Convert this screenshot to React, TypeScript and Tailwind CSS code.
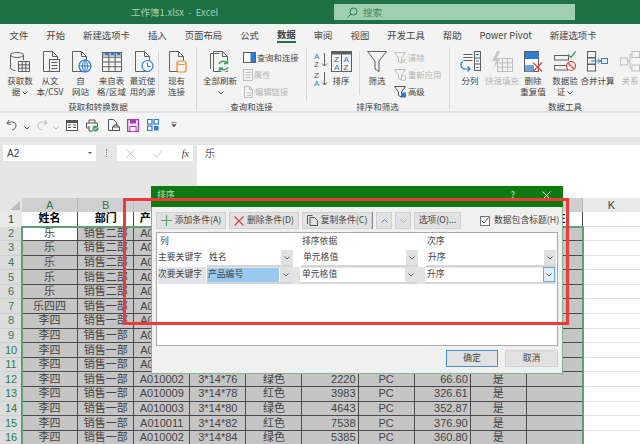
import type { ReactNode } from 'react';

const tabs = ['文件', '开始', '新建选项卡', '插入', '页面布局', '公式', '数据', '审阅', '视图', '开发工具', '帮助', 'Power Pivot', '新建选项卡'];
const columns = ['A', 'B', 'C', 'D', 'E', 'F', 'G', 'H', 'I', 'J'];
// D to I of the header row sit behind the dialog
const headers = ['姓名', '部门', '产品编号', '', '', '', '', '', '', '备注'];

const visibleRows: Record<number, string[]> = {
  12: ['A010002', '3*14*76', '绿色', '2220', '66.60'],
  13: ['A010009', '3*14*78', '红色', '3983', '326.61'],
  14: ['A010003', '3*14*80', '绿色', '4643', '352.87'],
  15: ['A010011', '3*14*82', '红色', '7538', '376.90'],
  16: ['A010002', '3*14*84', '绿色', '5385', '360.80'],
};

const rows = Array.from({ length: 15 }, (_, i) => {
  const n = i + 2;
  const name = n <= 6 ? '乐' : n === 7 ? '乐四四' : '李四';
  const dept = n <= 6 ? '销售二部' : '销售一部';
  const v = visibleRows[n];
  if (!v) return { n, cells: [name, dept, 'A0', '', '', '', '', '', '', ''] };
  return { n, cells: [name, dept, v[0], v[1], v[2], v[3], 'PC', v[4], '是', ''] };
});

const S = { fill: 'none', stroke: '#5f5f5f', strokeWidth: 1 };
const B = { fill: 'none', stroke: '#2b7cd3', strokeWidth: 1 };
const G = { fill: 'none', stroke: '#bdbdbd', strokeWidth: 1 };

function Ico({ w = 24, h = 24, children }: { w?: number; h?: number; children: ReactNode }) {
  return (
    <svg width={w} height={h} viewBox={`0 0 ${w} ${h}`} className="block shrink-0">
      {children}
    </svg>
  );
}

const Doc = ({ p = S }: { p?: typeof S }) => <path {...p} d="M3.5 1.5h9l5 5v15h-14zM12.5 1.5v5h5" />;

function Grid({ x, y, w, h, nx, ny, p = S }: { x: number; y: number; w: number; h: number; nx: number; ny: number; p?: typeof S }) {
  const d: string[] = [];
  for (let i = 0; i <= nx; i++) d.push(`M${x + (w * i) / nx} ${y}v${h}`);
  for (let i = 0; i <= ny; i++) d.push(`M${x} ${y + (h * i) / ny}h${w}`);
  return <path {...p} d={d.join('')} />;
}

const GetData = () => (
  <Ico w={22} h={22}>
    <path {...S} d="M1.5 4v13c0 1.5 3 2.5 5 2.5M14.5 4v5" />
    <ellipse {...S} cx="8" cy="4" rx="6.5" ry="2.5" />
    <rect x="9" y="10.5" width="12" height="10" fill="#f3f3f3" />
    <Grid x={9.5} y={10.5} w={11} h={10} nx={3} ny={3} />
  </Ico>
);
const FromText = () => (
  <Ico w={21} h={23}>
    <Doc />
    <rect x="9.5" y="9.5" width="10" height="12" fill="#f3f3f3" stroke="#5f5f5f" />
    <path {...S} d="M11.5 12.5h6M11.5 15.5h6M11.5 18.5h6" />
  </Ico>
);
const FromWeb = () => (
  <Ico w={23} h={23}>
    <Doc />
    <circle cx="16" cy="16" r="6" fill="#f3f3f3" stroke="#2b7cd3" strokeWidth="1.2" />
    <path {...B} d="M10 16h12M16 10v12M16 10c-3.5 3-3.5 9 0 12M16 10c3.5 3 3.5 9 0 12" />
  </Ico>
);
const FromTable = () => (
  <Ico w={22} h={22}>
    <rect x="1" y="1" width="20" height="4" fill="#9cc3e8" />
    <Grid x={1.5} y={1.5} w={19} h={19} nx={3} ny={4} />
    <path stroke="#2b7cd3" strokeWidth="2" d="M4 3h3M10 3h3M16 3h3" />
  </Ico>
);
const Recent = () => (
  <Ico w={22} h={23}>
    <Doc />
    <circle cx="15.5" cy="16" r="5.5" fill="#f3f3f3" stroke="#2b7cd3" strokeWidth="1.2" />
    <path {...B} d="M15.5 12.5V16.5H18.5" />
  </Ico>
);
const Existing = () => (
  <Ico w={22} h={23}>
    <Doc />
    <rect x="11" y="11" width="9" height="11" rx="2" fill="#f3f3f3" stroke="#e88a2f" strokeWidth="1.2" />
    <path fill="none" stroke="#e88a2f" d="M11 13.5c2 1.5 7 1.5 9 0" />
  </Ico>
);
const RefreshAll = () => (
  <Ico w={22} h={24}>
    <path {...S} d="M1.5 19V3.5h9" />
    <path {...S} d="M4.5 1.5h9l5 5v15h-14zM13.5 1.5v5h5" />
    <circle cx="14.5" cy="15.5" r="6.5" fill="#f3f3f3" />
    <path fill="none" stroke="#3fa35f" strokeWidth="1.4" d="M10 14c1-3 6-4 8-1M19 17c-1 3-6 4-8 1M18.5 10v3.5H15M10.5 21.5V18H14" />
  </Ico>
);
const QueryConn = () => (
  <Ico w={13} h={11}>
    <rect x=".5" y=".5" width="12" height="10" fill="#fff" stroke="#5f5f5f" />
    <rect x="7.5" y="1" width="4.5" height="9" fill="#2b7cd3" />
  </Ico>
);
const Props = () => (
  <Ico w={10} h={12}>
    <rect {...G} x=".5" y=".5" width="9" height="11" />
    <path {...G} d="M2.5 3.5h5M2.5 6h5M2.5 8.5h5" />
  </Ico>
);
const EditLinks = () => (
  <Ico w={11} h={12}>
    <path {...G} d="M1.5.5h5l3 3v8h-8zM6.5.5v3h3M4 7h4M4 9.5h4" />
  </Ico>
);
const SortAZ = ({ down }: { down?: boolean }) => (
  <Ico w={14} h={17}>
    <text x="0" y="8" fontSize="8" fill={down ? '#555' : '#2b7cd3'} fontFamily="Liberation Sans">{down ? 'Z' : 'A'}</text>
    <text x="0" y="16" fontSize="8" fill={down ? '#2b7cd3' : '#555'} fontFamily="Liberation Sans">{down ? 'A' : 'Z'}</text>
    <path {...S} d="M10.5 2v13M8 12.5l2.5 2.5 2.5-2.5" />
  </Ico>
);
const SortBig = () => (
  <Ico w={21} h={21}>
    <rect {...S} x=".5" y=".5" width="20" height="20" />
    <rect x="1" y="1" width="19" height="2.5" fill="#5f5f5f" />
    <path {...S} d="M10.5 3v17" />
    <text x="3" y="11" fontSize="8" fill="#555" fontFamily="Liberation Sans">Z</text>
    <text x="3" y="19" fontSize="8" fill="#2b7cd3" fontFamily="Liberation Sans">A</text>
    <text x="12.5" y="11" fontSize="8" fill="#2b7cd3" fontFamily="Liberation Sans">A</text>
    <text x="12.5" y="19" fontSize="8" fill="#555" fontFamily="Liberation Sans">Z</text>
  </Ico>
);
const Funnel = () => (
  <Ico w={20} h={21}>
    <path {...S} d="M.5.5h19L12 10v10.5l-4-2.5v-8z" />
  </Ico>
);
const SmallFunnel = ({ kind }: { kind: 'clear' | 'reapply' | 'adv' }) => (
  <Ico w={13} h={12}>
    <path fill="none" stroke={kind === 'adv' ? '#555' : '#bdbdbd'} d="M.5.5h11L7.5 6v5l-3-1.5V6z" />
    {kind === 'clear' && <path stroke="#bdbdbd" d="M7.5 7l4.5 4.5M12 7l-4.5 4.5" />}
    {kind === 'reapply' && <circle cx="9.5" cy="9" r="2.5" fill="none" stroke="#bdbdbd" />}
    {kind === 'adv' && <rect x="7" y="6.5" width="5" height="5" fill="#2b7cd3" />}
  </Ico>
);
const TextToCols = () => (
  <Ico w={21} h={21}>
    <path {...S} d="M3.5 3.5h9M3.5 6.5h9M3.5 9.5h9" />
    <rect {...S} x="14.5" y=".5" width="6" height="19" />
    <path {...S} d="M14.5 7h6M14.5 13h6" />
    <path stroke="#2b7cd3" d="M16 3.5h3M16 10h3M16 16.5h3" />
    <path {...B} strokeWidth="1.2" d="M3 10.5c-3.5 2-2.5 7.5 3 7.5h4M7.5 15.5L10 18l-2.5 2.5" />
  </Ico>
);
const FlashFill = () => (
  <Ico w={22} h={21}>
    <Grid x={6.5} y={7.5} w={15} h={13} nx={3} ny={3} p={G} />
    <path fill="#c8c8c8" d="M6 0L1 10h4l-3 8 8-11H6l3-7z" />
  </Ico>
);
const RemoveDup = () => (
  <Ico w={19} h={21}>
    <rect x=".5" y=".5" width="14" height="20" fill="#fff" stroke="#5f5f5f" />
    <rect x="1" y="1" width="13.5" height="7" fill="#2b7cd3" />
    <rect x="1" y="14" width="9" height="6.5" fill="#6aa5dd" />
    <path stroke="#e0443a" strokeWidth="1.2" d="M9 11.5l9 9M18 11.5l-9 9" />
  </Ico>
);
const Validate = () => (
  <Ico w={22} h={21}>
    <rect {...S} x=".5" y="4.5" width="14" height="4.5" />
    <rect {...S} x=".5" y="14.5" width="13" height="4.5" />
    <path fill="none" stroke="#3fa35f" strokeWidth="1.3" d="M14 3.5l3 3 4.5-6" />
    <circle cx="17" cy="15" r="4.5" fill="#f3f3f3" stroke="#e0443a" strokeWidth="1.2" />
    <path stroke="#e0443a" strokeWidth="1.2" d="M14 12l6 6" />
  </Ico>
);
const Consolidate = () => (
  <Ico w={21} h={21}>
    <rect {...S} x=".5" y=".5" width="8" height="6" />
    <rect {...S} x=".5" y="7" width="8" height="6" />
    <rect {...S} x=".5" y="13.5" width="8" height="6.5" />
    <rect {...B} x="14.5" y="7.5" width="6" height="5" />
    <path {...B} d="M4 10h10M11 7.5l2.5 2.5-2.5 2.5" />
  </Ico>
);
const Relations = () => (
  <Ico w={20} h={21}>
    <rect {...G} x=".5" y="7" width="7" height="7" />
    <rect {...G} x="12" y=".5" width="7.5" height="6" />
    <rect {...G} x="12" y="14" width="7.5" height="6" />
    <path {...G} d="M7.5 10.5H10M10 3.5V17M10 3.5h2M10 17h2" />
  </Ico>
);

function BigBtn({ w, icon, lines, off }: { w: string; icon: ReactNode; lines: ReactNode[]; off?: boolean }) {
  return (
    <div className={`${w} flex flex-col items-center pt-[3px] text-[8.5px] leading-[11px] ${off ? 'text-[#b4b4b4]' : ''}`}>
      <div className="h-[23px] flex items-center justify-center">{icon}</div>
      <div className="mt-[2px] flex flex-col items-center whitespace-nowrap">
        {lines.map((l, i) => <span key={i}>{l}</span>)}
      </div>
    </div>
  );
}

function SmallBtn({ icon, label, off }: { icon: ReactNode; label: string; off?: boolean }) {
  return (
    <div className={`h-[17px] flex items-center gap-[1px] text-[8.3px] whitespace-nowrap ${off ? 'text-[#b4b4b4]' : ''}`}>
      {icon}
      <span>{label}</span>
    </div>
  );
}

function Group({ w, label, children }: { w: string; label: string; children: ReactNode }) {
  return (
    <div className={`${w} shrink-0 flex flex-col h-[64px]`}>
      <div className="flex-1 flex">{children}</div>
      <div className="h-[11px] mb-[-1px] text-center text-[8.5px] leading-[11px]">{label}</div>
    </div>
  );
}

const Sep = ({ h = 'self-stretch', cls = '' }: { h?: string; cls?: string }) => (
  <div className={`w-px bg-[#dadada] shrink-0 ${h} ${cls}`} />
);

const Caret = () => (
  <svg width="6" height="4" viewBox="0 0 6 4" className="inline-block ml-[2px] align-middle">
    <path d="M.5.5L3 3 5.5.5" fill="none" stroke="#555" />
  </svg>
);

function Ribbon() {
  return (
    <div className="h-[64px] bg-[#f3f3f3] flex overflow-hidden text-[#444]">
      <Group w="w-[196px]" label="获取和转换数据">
        <BigBtn w="w-[35px] pl-[5px]" icon={<GetData />} lines={['获取数', <>据<Caret /></>]} />
        <BigBtn w="w-[30px]" icon={<FromText />} lines={['从文', '本/CSV']} />
        <BigBtn w="w-[31px]" icon={<FromWeb />} lines={['自', '网站']} />
        <BigBtn w="w-[31px]" icon={<FromTable />} lines={['来自表', '格/区域']} />
        <BigBtn w="w-[31px]" icon={<Recent />} lines={['最近使', '用的源']} />
        <Sep h="h-[44px]" cls="mt-[4px]" />
        <BigBtn w="w-[35px]" icon={<Existing />} lines={['现有', '连接']} />
      </Group>
      <Sep />
      <Group w="w-[109px]" label="查询和连接">
        <BigBtn w="w-[46px]" icon={<RefreshAll />} lines={['全部刷新', <Caret />]} />
        <div className="flex flex-col pt-[2px]">
          <SmallBtn icon={<QueryConn />} label="查询和连接" />
          <SmallBtn icon={<Props />} label="属性" off />
          <SmallBtn icon={<EditLinks />} label="编辑链接" off />
        </div>
      </Group>
      <Group w="w-[143px]" label="排序和筛选">
        <div className="border-l border-[#dadada] w-[21px] pl-[7px] pt-[4px] flex flex-col gap-[2px]">
          <SortAZ />
          <SortAZ down />
        </div>
        <BigBtn w="w-[28px] mr-[4px]" icon={<SortBig />} lines={['排序']} />
        <Sep h="h-[44px]" cls="mt-[4px]" />
        <BigBtn w="w-[34px]" icon={<Funnel />} lines={['筛选']} />
        <div className="flex flex-col pt-[2px]">
          <SmallBtn icon={<SmallFunnel kind="clear" />} label="清除" off />
          <SmallBtn icon={<SmallFunnel kind="reapply" />} label="重新应用" off />
          <SmallBtn icon={<SmallFunnel kind="adv" />} label="高级" />
        </div>
      </Group>
      <Sep />
      <Group w="w-[230px]" label="数据工具">
        <BigBtn w="w-[38px] pl-[2px]" icon={<TextToCols />} lines={['分列']} />
        <BigBtn w="w-[28px]" icon={<FlashFill />} lines={['快速填充']} off />
        <BigBtn w="w-[34px]" icon={<RemoveDup />} lines={['删除', '重复值']} />
        <BigBtn w="w-[30px]" icon={<Validate />} lines={['数据验', <>证<Caret /></>]} />
        <BigBtn w="w-[35px]" icon={<Consolidate />} lines={['合并计算']} />
        <BigBtn w="w-[30px]" icon={<Relations />} lines={['关系']} off />
      </Group>
    </div>
  );
}

function QuickAccess() {
  return (
    <div className="h-[24px] bg-[#f5f5f5] flex items-center pl-[6px]">
      <svg width="11" height="12" viewBox="0 0 11 12"><path d="M3 1L1 4.5l3.5 1M1.5 4.5C4 2 10 2.5 10 6.5c0 2.5-2 4-4 4.5" fill="none" stroke="#555" /></svg>
      <span className="ml-[5px]"><Caret /></span>
      <svg width="11" height="12" viewBox="0 0 11 12" className="ml-[7px]"><path d="M8 1l2 3.5-3.5 1M9.5 4.5C7 2 1 2.5 1 6.5c0 2.5 2 4 4 4.5" fill="none" stroke="#bdbdbd" /></svg>
      <span className="ml-[3px] opacity-40"><Caret /></span>
      <svg width="12" height="11" viewBox="0 0 12 11" className="ml-[7px]"><rect x=".5" y=".5" width="11" height="10" fill="#fff" stroke="#555" /><rect x="1" y="1" width="10" height="2" fill="#555" /><path stroke="#555" d="M2 5h3M7 5h3M2 7.5h3M7 7.5h3" /></svg>
      <svg width="13" height="13" viewBox="0 0 13 13" className="ml-[8px]"><path d="M3 4V1h6v3M3 9H.5V4h11v3M3 7v5h4" fill="none" stroke="#555" /><circle cx="9.5" cy="9.5" r="3" fill="#3fa35f" /><path d="M8 9.5l1 1 2-2" fill="none" stroke="#fff" /></svg>
      <svg width="13" height="13" viewBox="0 0 13 13" className="ml-[8px]"><path d="M1.5.5h5l3 3v3M1.5.5v11h4" fill="none" stroke="#555" /><rect x="5.5" y="8" width="7" height="3.5" fill="none" stroke="#555" /><path d="M7 8V6h4v2" fill="none" stroke="#555" /></svg>
      <svg width="12" height="13" viewBox="0 0 12 13" className="ml-[7px]"><path d="M.5.5h11v12H.5z" fill="#f3e6f5" stroke="#a83bb5" strokeWidth="1.5" /><rect x="3" y="1" width="6" height="3.5" fill="#a83bb5" /><rect x="3" y="7.5" width="6" height="5" fill="#fff" stroke="#a83bb5" /></svg>
      <svg width="12" height="12" viewBox="0 0 12 12" className="ml-[8px]"><rect x=".5" y=".5" width="4.5" height="4.5" fill="#fff" stroke="#2b7cd3" strokeWidth="1.2" /><rect x="7" y=".5" width="4.5" height="4.5" fill="#fff" stroke="#2b7cd3" strokeWidth="1.2" /><rect x=".5" y="7" width="4.5" height="4.5" fill="#fff" stroke="#2b7cd3" strokeWidth="1.2" /><rect x="7" y="7" width="4.5" height="4.5" fill="#2b7cd3" /></svg>
      <svg width="6" height="6" viewBox="0 0 6 6" className="ml-[12px]"><path d="M.5.5h5M1 2.5h4L3 5z" fill="#555" stroke="#555" strokeWidth=".7" /></svg>
    </div>
  );
}

function FormulaBar() {
  return (
    <div className="h-[61px] bg-[#e6e6e6] pt-[8px] flex text-[#444]">
      <div className="ml-[3px] w-[93px] h-[16px] bg-white flex items-center justify-between px-[4px] text-[10px] font-['Liberation_Sans',sans-serif]">
        <span>A2</span>
        <span className="w-0 h-0 border-x-[2px] border-x-transparent border-t-[2px] border-t-[#555]" />
      </div>
      <div className="w-[21px] h-[16px] flex items-center justify-center">
        <span className="w-px h-[8px] border-l border-dotted border-[#888]" />
      </div>
      <div className="w-[76px] h-[16px] bg-white flex items-center justify-between pl-[9px] pr-[4px]">
        <svg width="9" height="9" viewBox="0 0 9 9"><path d="M.5.5l8 8M8.5.5l-8 8" stroke="#c4c4c4" /></svg>
        <svg width="10" height="9" viewBox="0 0 10 9"><path d="M.5 5l3 3 6-7" fill="none" stroke="#c4c4c4" /></svg>
        <span className="text-[10px] italic font-['Liberation_Serif',serif]">fx</span>
      </div>
      <div className="ml-[4px] flex-1 self-stretch bg-white pl-[8px] text-[10px] leading-[16px] text-[#555]">乐</div>
    </div>
  );
}

function Sheet() {
  const cell = 'w-[56.1px] shrink-0 border-r border-b border-[#4a4a4a] flex items-center px-[2px] overflow-hidden whitespace-nowrap';
  const align = (c: number) => (c === 5 || c === 7 ? 'justify-end' : 'justify-center');
  return (
    <div className="relative flex-1 overflow-hidden bg-white text-[11px] leading-none text-[#444] font-['Liberation_Sans','Noto_Sans_CJK_SC',sans-serif]">
      <div className="flex h-[14px]">
        <div className="w-[22px] shrink-0 bg-[#e6e6e6] flex items-end justify-end p-[2px]">
          <span className="w-0 h-0 border-l-[10px] border-l-transparent border-b-[9px] border-b-[#bcbcbc]" />
        </div>
        {columns.map((c) => (
          <div key={c} className="w-[56.1px] shrink-0 bg-[#cfcfcf] border-r border-[#b8b8b8] flex items-center justify-center text-[#2f7a52]">{c}</div>
        ))}
        <div className="flex-1 bg-[#e9e9e9] flex items-center justify-center text-[#444]">K</div>
      </div>
      <div className="flex h-[14.5px]">
        <div className="w-[22px] shrink-0 bg-[#e9e9e9] flex items-center justify-center text-[#333]">1</div>
        {headers.map((h, i) => (
          <div key={i} className={`${cell} justify-center font-bold text-black bg-white`}>{h}</div>
        ))}
        <div className="flex-1 border-b border-[#e2e2e2]" />
      </div>
      {rows.map((r) => (
        <div key={r.n} className="flex h-[14.6px]">
          <div className="w-[22px] shrink-0 bg-[#dcdcdc] border-b border-[#cfcfcf] flex items-center justify-center text-[#2f7a52]">{r.n}</div>
          {r.cells.map((c, i) => (
            <div key={i} className={`${cell} ${align(i)} ${i === 2 && c === 'A0' ? 'justify-start pl-[6px]' : ''} ${r.n === 2 && i === 0 ? 'bg-white' : 'bg-[#c5c5c5]'}`}>{c}</div>
          ))}
          <div className="flex-1 border-b border-[#e2e2e2]" />
        </div>
      ))}
      {/* selection outline */}
      <div className="absolute left-[21px] top-[28px] w-[563px] h-[240px] border-2 border-[#5f9f78] pointer-events-none" />
    </div>
  );
}

function ToolBtn({ w, children }: { w: string; children: ReactNode }) {
  return (
    <div className={`${w} h-[17px] shrink-0 bg-[#e1e1e1] border border-[#d0d0d0] flex items-center justify-center gap-[3px] whitespace-nowrap`}>
      {children}
    </div>
  );
}

function Combo({ w, text, selected, blue }: { w: string; text: string; selected?: boolean; blue?: boolean }) {
  return (
    <div className={`${w} h-[16px] shrink-0 bg-white border-b-2 border-[#d5d5d5] flex items-center pl-[1px]`}>
      <span className={`flex-1 h-[14px] pl-[1px] flex items-center ${selected ? 'bg-[#99c9ee]' : ''}`}>{text}</span>
      <span className={`w-[12px] h-[15px] ml-[1px] flex items-center justify-center ${blue ? 'bg-[#e4eef8] border border-[#6aa8e0]' : 'bg-[#e1e1e1]'}`}>
        <svg width="6" height="4" viewBox="0 0 6 4"><path d="M.5.5L3 3 5.5.5" fill="none" stroke="#666" /></svg>
      </span>
    </div>
  );
}

function SortDialog() {
  return (
    <div className="absolute left-[151px] top-[186px] w-[412px] h-[188px] bg-[#f0f0f0] border border-[#7fb58b] flex flex-col text-[8.8px] leading-none text-[#444]">
      <div className="h-[21px] -mx-px -mt-px bg-[#0f7a10] flex items-start justify-between pt-[5px] pl-[6px] pr-[12px] text-[#bcd9bc]">
        <span>排序</span>
        <div className="flex gap-[27px] items-center">
          <span className="text-[#d5e6d5]">?</span>
          <svg width="9" height="9" viewBox="0 0 9 9"><path d="M.5.5l8 8M8.5.5l-8 8" stroke="#e6f0e6" /></svg>
        </div>
      </div>
      <div className="flex items-center pl-[4px] pt-[5px] gap-[3px]">
        <ToolBtn w="w-[70px]">
          <svg width="11" height="11" viewBox="0 0 11 11"><path d="M5.5 0v11M0 5.5h11" stroke="#5aa36d" strokeWidth="1.2" /></svg>
          添加条件(A)
        </ToolBtn>
        <ToolBtn w="w-[70px]">
          <svg width="10" height="10" viewBox="0 0 10 10"><path d="M.5.5l9 9M9.5.5l-9 9" stroke="#d9443a" strokeWidth="1.2" /></svg>
          删除条件(D)
        </ToolBtn>
        <ToolBtn w="w-[70px]">
          <svg width="11" height="11" viewBox="0 0 11 11"><path d="M.5 9V.5h5M3 2.5h4.5l3 3v5H3z" fill="none" stroke="#555" /></svg>
          复制条件(C)
        </ToolBtn>
        <div className="w-px h-[17px] bg-[#888] -ml-[3px]" />
        <ToolBtn w="w-[16px]">
          <svg width="7" height="4" viewBox="0 0 7 4"><path d="M.5 3.5L3.5.5l3 3" fill="none" stroke="#2b88d8" /></svg>
        </ToolBtn>
        <ToolBtn w="w-[16px]">
          <svg width="7" height="4" viewBox="0 0 7 4"><path d="M.5.5l3 3 3-3" fill="none" stroke="#aaa" /></svg>
        </ToolBtn>
        <ToolBtn w="w-[47px]">选项(O)...</ToolBtn>
        <span className="ml-[16px] w-[10px] h-[10px] bg-white border border-[#777] flex items-center justify-center">
          <svg width="8" height="7" viewBox="0 0 8 7"><path d="M.5 3.5L3 6l4.500-5.500" fill="none" stroke="#444" /></svg>
        </span>
        <span className="ml-[1px] whitespace-nowrap">数据包含标题(H)</span>
      </div>
      <div className="mx-[4px] mt-[3px] h-[114px] bg-white border border-[#a9a9a9] flex flex-col">
        <div className="h-[17px] flex items-center">
          <span className="ml-[3px] w-[142px]">列</span>
          <span className="w-[125px]">排序依据</span>
          <span>次序</span>
        </div>
        <div className="h-[17px] flex items-center">
          <span className="ml-[1px] w-[49px] whitespace-nowrap -mt-[3px]">主要关键字</span>
          <Combo w="w-[86px]" text="姓名" />
          <Combo w="w-[117px] ml-[8px]" text="单元格值" />
          <Combo w="w-[130px] ml-[8px]" text="升序" />
        </div>
        <div className="h-[17px] flex items-center bg-[#e2e2e8] mr-[1px] ml-[1px]">
          <span className="w-[48px] whitespace-nowrap -mt-[3px]">次要关键字</span>
          <Combo w="w-[86px]" text="产品编号" selected />
          <Combo w="w-[117px] ml-[8px]" text="单元格值" />
          <Combo w="w-[130px] ml-[8px]" text="升序" blue />
        </div>
      </div>
      <div className="flex justify-end gap-[7px] pr-[4px] mt-[4px]">
        <div className="w-[52px] h-[17px] bg-[#e1e1e1] border border-[#4a90d9] flex items-center justify-center">确定</div>
        <div className="w-[53px] h-[17px] bg-[#e1e1e1] border border-[#d0d0d0] flex items-center justify-center">取消</div>
      </div>
    </div>
  );
}

export default function App() {
  return (
    <div className="relative w-[640px] h-[444px] overflow-hidden flex flex-col bg-white font-['Noto_Sans_CJK_SC','Liberation_Sans',sans-serif]">
      <div className="h-[24px] shrink-0 bg-[#1e7145] flex items-center text-[9.5px] text-[#a5cfb7]">
        <span className="ml-[131px] w-[203px] whitespace-nowrap">工作簿1.xlsx&nbsp; - &nbsp;Excel</span>
        <div className="w-[241px] h-[16px] bg-[#9fcfb0] flex items-center pl-[13px] text-[#3d8a5f]">
          <svg width="11" height="11" viewBox="0 0 11 11"><circle cx="6.5" cy="4.5" r="3.5" fill="none" stroke="#2f7a52" /><path d="M4 7L.5 10.5" stroke="#2f7a52" /></svg>
          <span className="ml-[5px]">搜索</span>
        </div>
      </div>
      <div className="h-[23px] shrink-0 bg-[#f3f3f3] flex items-start pt-[4px] pl-[9.5px] gap-[18px] text-[9.4px] text-[#444] whitespace-nowrap">
        {tabs.map((t, i) => (
          <div key={i} className={`h-[15px] flex items-center ${t === '数据' ? 'border-b-2 border-[#217346] font-bold' : ''}`}>{t}</div>
        ))}
      </div>
      <Ribbon />
      <div className="h-[2px] shrink-0 bg-[#e1e1e1]" />
      <QuickAccess />
      <FormulaBar />
      <Sheet />
      <SortDialog />
      {/* red annotation box */}
      <div className="absolute left-[123px] top-[198px] w-[446px] h-[127px] border-[3px] border-[#f03a3a] pointer-events-none" />
    </div>
  );
}
